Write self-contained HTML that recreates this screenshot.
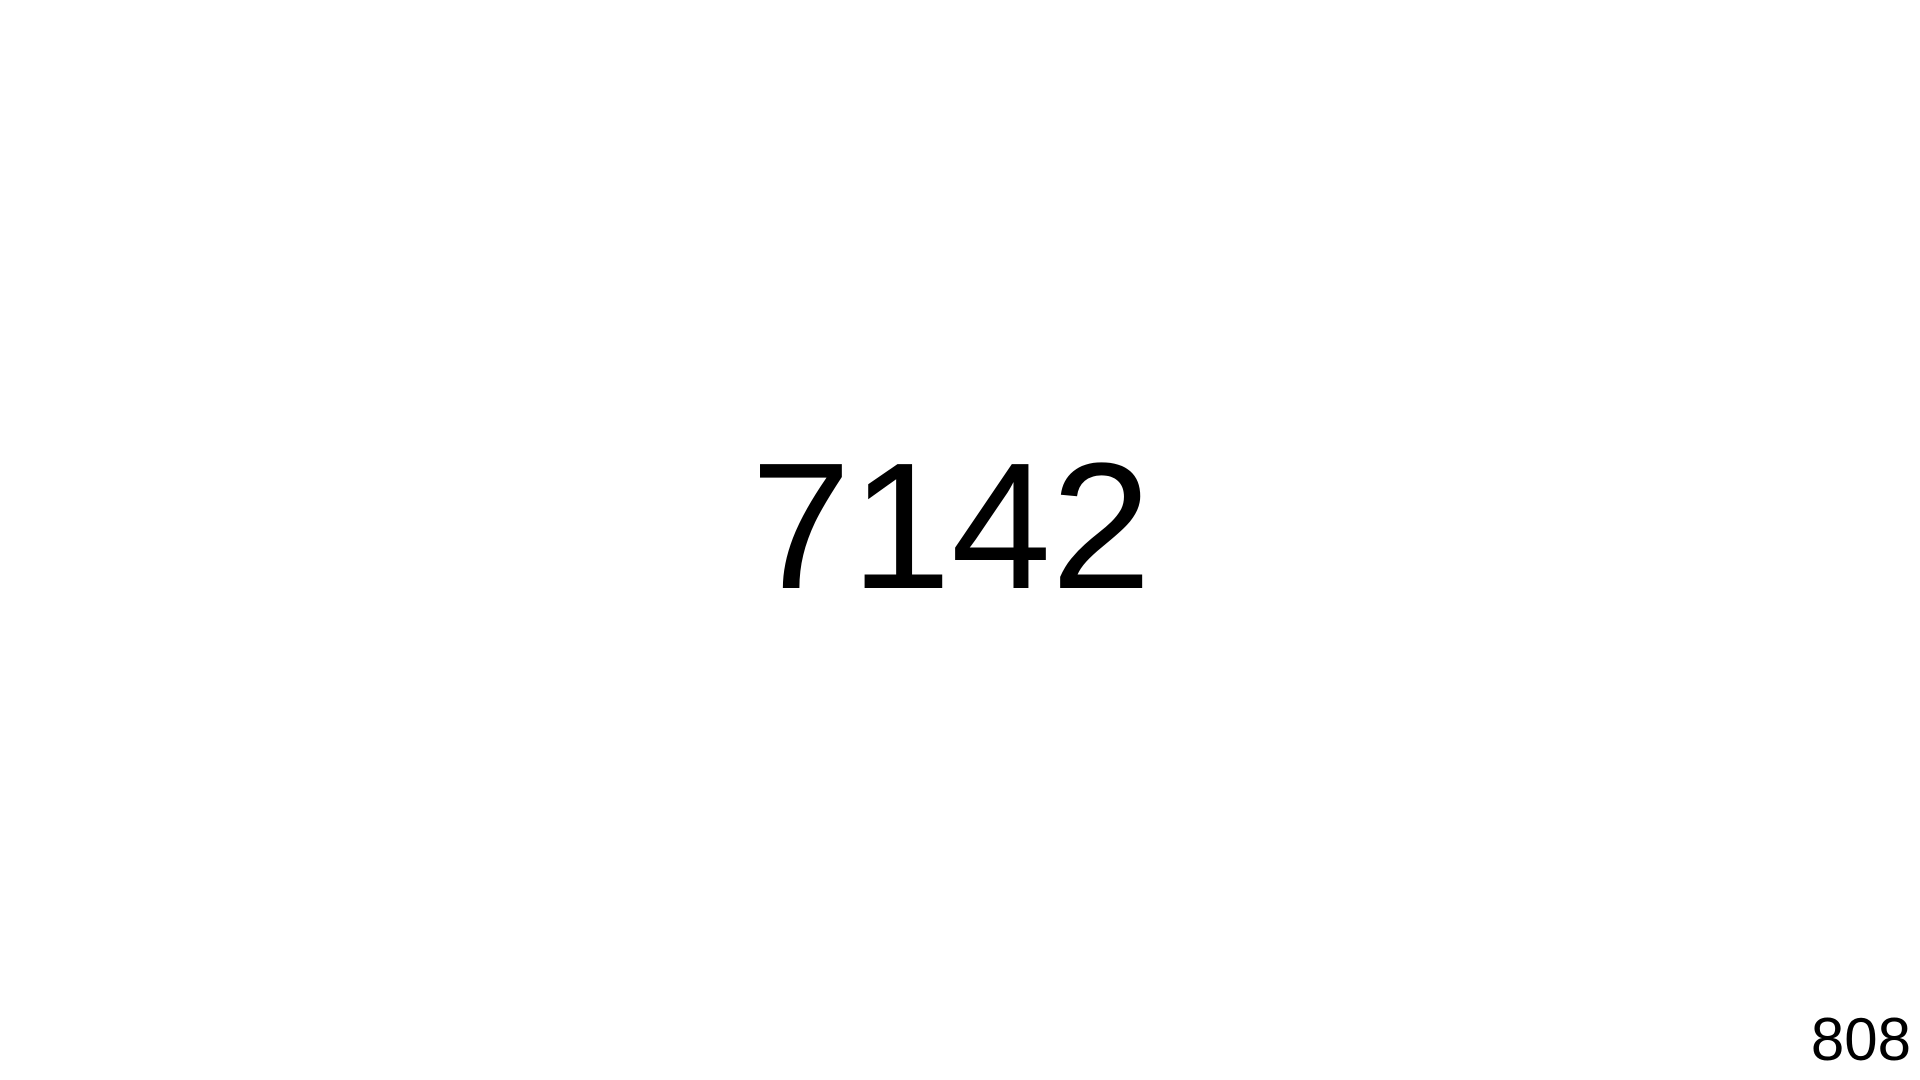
<!DOCTYPE html>
<html><head><meta charset="utf-8"><style>
html,body{margin:0;padding:0;width:1920px;height:1080px;background:#fff;overflow:hidden;font-family:"Liberation Sans",sans-serif;color:#000}
.big{position:absolute;left:0;width:1902px;text-align:center;top:437px;font-size:180px;line-height:1}
.pn{position:absolute;right:9px;top:1010px;font-size:60px;line-height:1}
</style></head><body>
<div class="big">7142</div>
<div class="pn">808</div>
</body></html>
